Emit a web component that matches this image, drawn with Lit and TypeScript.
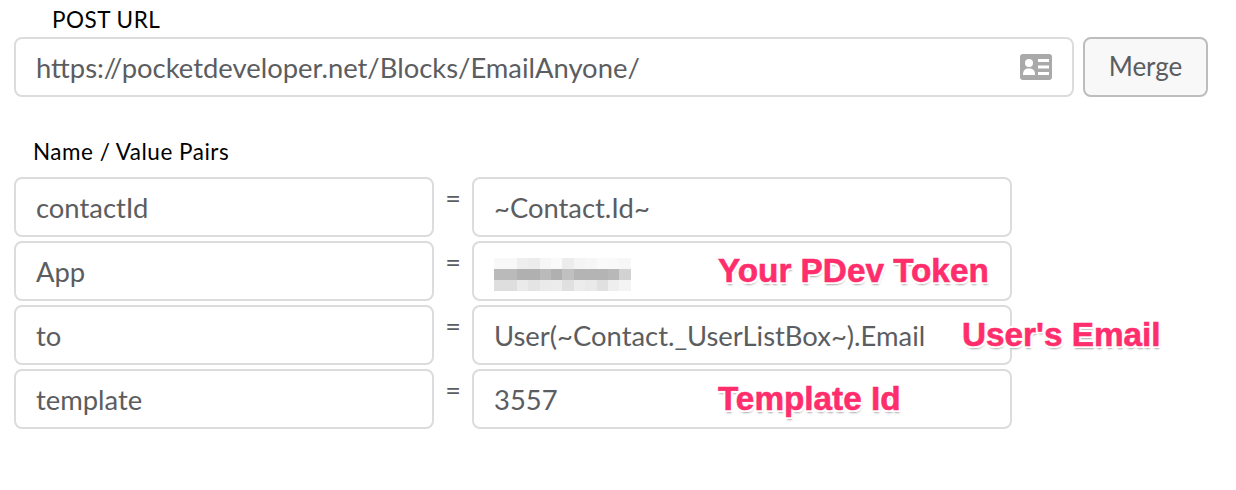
import { LitElement, html, css } from "lit";
import { customElement } from "lit/decorators.js";

const PAIRS = [
  { name: "contactId", value: "~Contact.Id~" },
  { name: "App", value: "", blurred: true },
  { name: "to", value: "User(~Contact._UserListBox~).Email" },
  { name: "template", value: "3557" },
];

const NOTES = [
  { text: "Your PDev Token", x: 718, y: 251 },
  { text: "User's Email", x: 962, y: 315 },
  { text: "Template Id", x: 718, y: 379 },
];

// grey level per mosaic cell of the blurred token
const BLUR = [
  [248, 248, 238, 236, 246, 250, 236, 244, 246, 250, 249, 247],
  [186, 186, 176, 176, 186, 176, 192, 180, 180, 180, 184, 210],
  [222, 222, 234, 228, 234, 236, 224, 236, 233, 224, 238, 244],
];

@customElement("app-root")
export class AppRoot extends LitElement {
  static styles = css`
    :host {
      display: block;
      position: relative;
      height: 490px;
      background: #fff;
      font-family: Lato, "Liberation Sans", sans-serif;
      overflow: hidden;
    }
    .page {
      padding: 8px 28px 0 14px;
    }
    .label {
      color: #000;
      font-size: 22.5px;
      letter-spacing: 0.5px;
      line-height: 24px;
    }
    .url-label {
      margin-left: 38px;
      margin-bottom: 5px;
    }
    .pairs-label {
      margin: 43px 0 13px 19px;
    }
    .url-row {
      display: flex;
      gap: 9px;
    }
    .field {
      box-sizing: border-box;
      height: 60px;
      border: 2px solid #dcdcdc;
      border-radius: 8px;
      background: #fff;
      color: #5b5d60;
      font-size: 27.4px;
      padding: 0 20px;
      display: flex;
      align-items: center;
      justify-content: space-between;
    }
    .url {
      width: 1060px;
    }
    .url svg {
      flex: none;
    }
    .btn {
      box-sizing: border-box;
      width: 125px;
      height: 60px;
      border: 2px solid #bdbdbd;
      border-radius: 8px;
      background: #f8f8f8;
      color: #5b5d60;
      font-size: 26px;
      padding-bottom: 3px;
      display: flex;
      align-items: center;
      justify-content: center;
    }
    .pairs {
      display: grid;
      grid-template-columns: 420px 540px;
      column-gap: 38px;
      row-gap: 4px;
    }
    .pair {
      display: contents;
    }
    .cell {
      position: relative;
    }
    .eq {
      position: absolute;
      left: 100%;
      top: 8px;
      width: 38px;
      text-align: center;
      color: #5b5d60;
      font-size: 27px;
      line-height: 26px;
    }
    .mosaic {
      display: grid;
      grid-template-columns: repeat(12, 11.4px);
      grid-auto-rows: 11px;
      margin-top: 6px;
    }
    .note {
      position: absolute;
      color: #ff2d6c;
      font-family: "Liberation Sans", Arial, sans-serif;
      font-weight: 700;
      font-size: 33.3px;
      line-height: 40px;
      white-space: nowrap;
      -webkit-text-stroke: 0.6px #ff2d6c;
      text-shadow: 2px 0 0 #fff, -2px 0 0 #fff, 0 2px 0 #fff, 0 -2px 0 #fff,
        2px 2px 0 #fff, -2px 2px 0 #fff, 2px -2px 0 #fff, -2px -2px 0 #fff,
        1px 3px 2px #aaa;
    }
  `;

  render() {
    return html`
      <div class="page">
        <div class="label url-label">POST URL</div>
        <div class="url-row">
          <div class="field url">
            <span>https://pocketdeveloper.net/Blocks/EmailAnyone/</span>
            <svg width="32" height="26" viewBox="0 0 32 26">
              <rect width="32" height="26" rx="3" fill="#a9a9a9" />
              <circle cx="9" cy="9" r="4" fill="#fff" />
              <path d="M3 21c0-5 2-6.500 6-6.500s6 1.500 6 6.500z" fill="#fff" />
              <path d="M18 5h11v3H18zM18 11.500h11v3H18zM18 18h11v3H18z" fill="#fff" />
            </svg>
          </div>
          <div class="btn">Merge</div>
        </div>
        <div class="label pairs-label">Name / Value Pairs</div>
        <div class="pairs">
          ${PAIRS.map(
            (p) => html`
              <div class="pair">
                <div class="cell">
                  <div class="field">${p.name}</div>
                  <div class="eq">=</div>
                </div>
                <div class="field">
                  ${p.blurred ? this.renderBlur() : p.value}
                </div>
              </div>
            `
          )}
        </div>
      </div>
      ${NOTES.map(
        (n) => html`<div class="note" style="left:${n.x}px;top:${n.y}px">${n.text}</div>`
      )}
    `;
  }

  private renderBlur() {
    return html`
      <div class="mosaic">
        ${BLUR.flat().map(
          (g) => html`<div style="background:rgb(${g},${g},${g})"></div>`
        )}
      </div>
    `;
  }
}
